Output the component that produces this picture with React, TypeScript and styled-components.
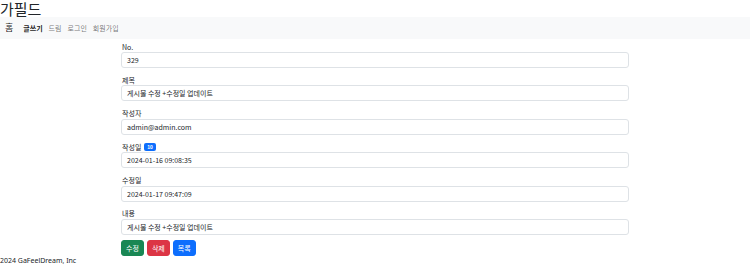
import React from "react";
import styled, { createGlobalStyle } from "styled-components";

const Global = createGlobalStyle`
  html, body { margin: 0; padding: 0; background: #fff; }
  body { font-family: "Noto Sans CJK KR", "Noto Sans", sans-serif; color: #212529; }
  * { box-sizing: border-box; }
`;

const Title = styled.h1`
  margin: 0;
  height: 17px;
  font-size: 15px;
  font-weight: 400;
  line-height: 17px;
  color: #212529;
`;

const Nav = styled.nav`
  display: flex;
  align-items: center;
  height: 22px;
  background: #f8f9fa;
  padding-left: 2px;
`;

const NavLink = styled.a<{ $tone: "brand" | "active" | "muted" }>`
  line-height: 22px;
  padding: 0 3px;
  text-decoration: none;
  color: ${(p) => (p.$tone === "muted" ? "rgba(0,0,0,0.55)" : "rgba(0,0,0,0.9)")};
  font-size: ${(p) => (p.$tone === "brand" ? "9px" : "7px")};
  font-weight: ${(p) => (p.$tone === "active" ? 700 : 400)};
  margin-right: ${(p) => (p.$tone === "brand" ? "4px" : "0")};
`;

const Container = styled.main`
  width: 508px;
  margin: 0 auto;
  padding-top: 2px;
  display: flex;
  flex-direction: column;
`;

const Field = styled.div`
  display: flex;
  flex-direction: column;
  margin-bottom: 6.4px;
`;

const Label = styled.label`
  display: flex;
  align-items: center;
  gap: 3px;
  height: 11px;
  font-size: 7px;
  color: #212529;
  padding-left: 1px;
`;

const Badge = styled.span`
  display: inline-flex;
  align-items: center;
  justify-content: center;
  background: #0d6efd;
  color: #fff;
  font-size: 5px;
  font-weight: 700;
  height: 8px;
  padding: 0 3px;
  border-radius: 2px;
  font-family: "Liberation Sans", sans-serif;
`;

const Input = styled.div`
  height: 16px;
  border: 1px solid #dee2e6;
  border-radius: 3px;
  padding: 0 5px;
  font-size: 7px;
  line-height: 14px;
  color: #212529;
`;

const Buttons = styled.div`
  display: flex;
  gap: 3px;
  margin-top: -1.4px;
`;

const Btn = styled.button<{ $bg: string }>`
  height: 16px;
  padding: 0 4px;
  border: 1px solid ${(p) => p.$bg};
  background: ${(p) => p.$bg};
  color: #fff;
  font-size: 7px;
  border-radius: 3px;
  font-family: "Noto Sans CJK KR", sans-serif;
  line-height: 14px;
`;

const Footer = styled.footer`
  font-size: 7px;
  line-height: 10px;
  color: #212529;
  font-family: "Noto Sans", "Noto Sans CJK KR", sans-serif;
`;

const fields: { label: string; value: string; badge?: string }[] = [
  { label: "No.", value: "329" },
  { label: "제목", value: "게시물 수정 +수정일 업데이트" },
  { label: "작성자", value: "admin@admin.com" },
  { label: "작성일", value: "2024-01-16 09:08:35", badge: "10" },
  { label: "수정일", value: "2024-01-17 09:47:09" },
  { label: "내용", value: "게시물 수정 +수정일 업데이트" },
];

export default function App() {
  return (
    <>
      <Global />
      <Title>가필드</Title>
      <Nav>
        <NavLink $tone="brand">홈</NavLink>
        <NavLink $tone="active">글쓰기</NavLink>
        <NavLink $tone="muted">드림</NavLink>
        <NavLink $tone="muted">로그인</NavLink>
        <NavLink $tone="muted">회원가입</NavLink>
      </Nav>
      <Container>
        {fields.map((f) => (
          <Field key={f.label}>
            <Label>
              {f.label}
              {f.badge && <Badge>{f.badge}</Badge>}
            </Label>
            <Input>{f.value}</Input>
          </Field>
        ))}
        <Buttons>
          <Btn $bg="#198754">수정</Btn>
          <Btn $bg="#dc3545">삭제</Btn>
          <Btn $bg="#0d6efd">목록</Btn>
        </Buttons>
      </Container>
      <Footer>2024 GaFeelDream, Inc</Footer>
    </>
  );
}
